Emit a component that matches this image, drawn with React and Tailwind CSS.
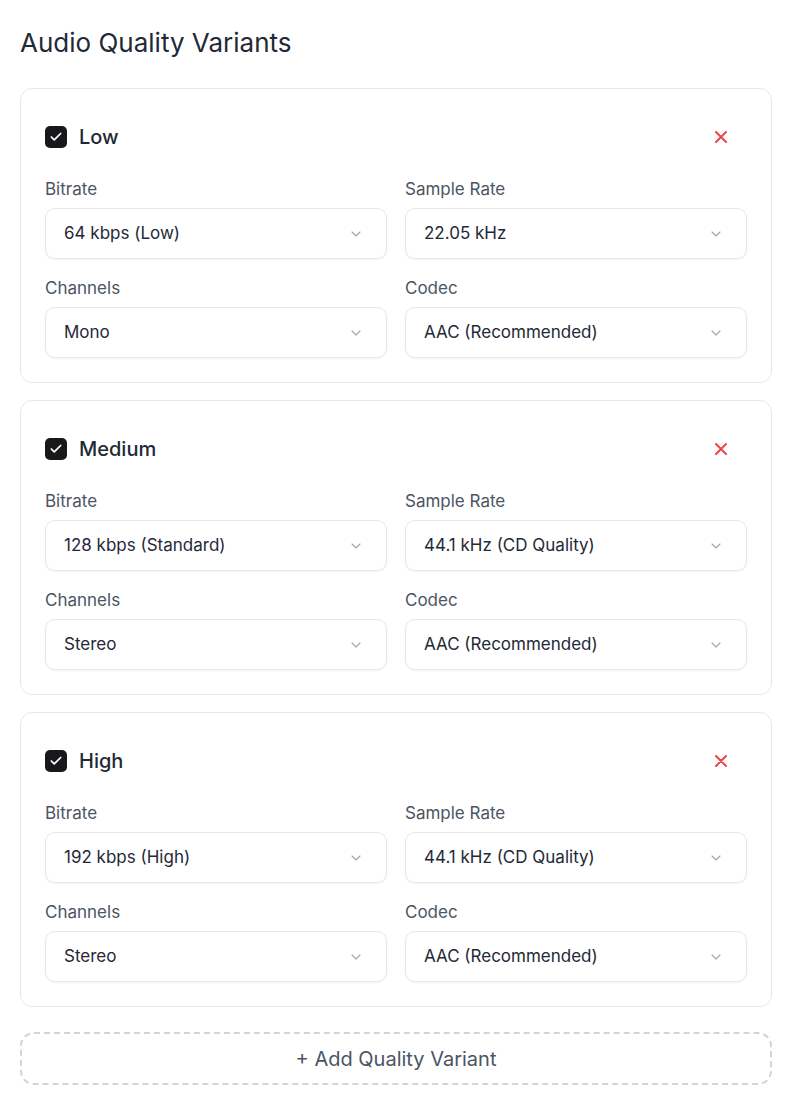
import React from 'react';

const variants = [
  {
    name: 'Low',
    bitrate: '64 kbps (Low)',
    sampleRate: '22.05 kHz',
    channels: 'Mono',
    codec: 'AAC (Recommended)',
  },
  {
    name: 'Medium',
    bitrate: '128 kbps (Standard)',
    sampleRate: '44.1 kHz (CD Quality)',
    channels: 'Stereo',
    codec: 'AAC (Recommended)',
  },
  {
    name: 'High',
    bitrate: '192 kbps (High)',
    sampleRate: '44.1 kHz (CD Quality)',
    channels: 'Stereo',
    codec: 'AAC (Recommended)',
  },
];

const Chevron = () => (
  <svg width="16" height="16" viewBox="0 0 24 24" fill="none" stroke="#9ca3af" strokeWidth="1.6" strokeLinecap="round" strokeLinejoin="round">
    <path d="m6 9 6 6 6-6" />
  </svg>
);

const Field = ({ label, value }) => (
  <div className="flex flex-col">
    <label className="text-[17px] leading-6 text-[#4b5563] mb-[7px]">{label}</label>
    <div className="h-[51px] flex items-center justify-between pl-[18px] pr-[22px] border border-[#e5e7eb] rounded-[10px] bg-white shadow-[0_1px_2px_rgba(0,0,0,0.05)]">
      <span className="text-[17px] text-[#1f2937]">{value}</span>
      <Chevron />
    </div>
  </div>
);

const VariantCard = ({ v }) => (
  <div className="border border-[#e5e7eb] rounded-[12px] bg-white px-6 pt-[34px] pb-6">
    <div className="flex items-center justify-between h-7">
      <div className="flex items-center gap-3">
        <span className="w-[22px] h-[22px] rounded-[5px] bg-[#18181b] flex items-center justify-center">
          <svg width="14" height="14" viewBox="0 0 24 24" fill="none" stroke="white" strokeWidth="3" strokeLinecap="round" strokeLinejoin="round">
            <path d="M20 6 9 17l-5-5" />
          </svg>
        </span>
        <span className="text-[20px] font-medium text-[#1f2937]">{v.name}</span>
      </div>
      <button className="mr-[16px] text-[#ef4444]">
        <svg width="20" height="20" viewBox="0 0 24 24" fill="none" stroke="currentColor" strokeWidth="2.4" strokeLinecap="round">
          <path d="M18 6 6 18M6 6l12 12" />
        </svg>
      </button>
    </div>
    <div className="grid grid-cols-2 gap-x-[18px] gap-y-[17px] mt-[26px]">
      <Field label="Bitrate" value={v.bitrate} />
      <Field label="Sample Rate" value={v.sampleRate} />
      <Field label="Channels" value={v.channels} />
      <Field label="Codec" value={v.codec} />
    </div>
  </div>
);

export default function App() {
  return (
    <div className="bg-white min-h-[1113px] font-['Inter','Noto_Sans',sans-serif]">
      <div className="ml-5 w-[752px] pt-[27px]">
        <h2 className="text-[26px] leading-8 text-[#1f2937] mb-[29px]">Audio Quality Variants</h2>
        <div className="flex flex-col gap-[17px]">
          {variants.map(v => (
            <VariantCard key={v.name} v={v} />
          ))}
        </div>
        <button className="mt-[25px] w-full h-[53px] border-2 border-dashed border-[#d1d5db] rounded-[14px] text-[20px] text-[#4b5563]">
          + Add Quality Variant
        </button>
      </div>
    </div>
  );
}
